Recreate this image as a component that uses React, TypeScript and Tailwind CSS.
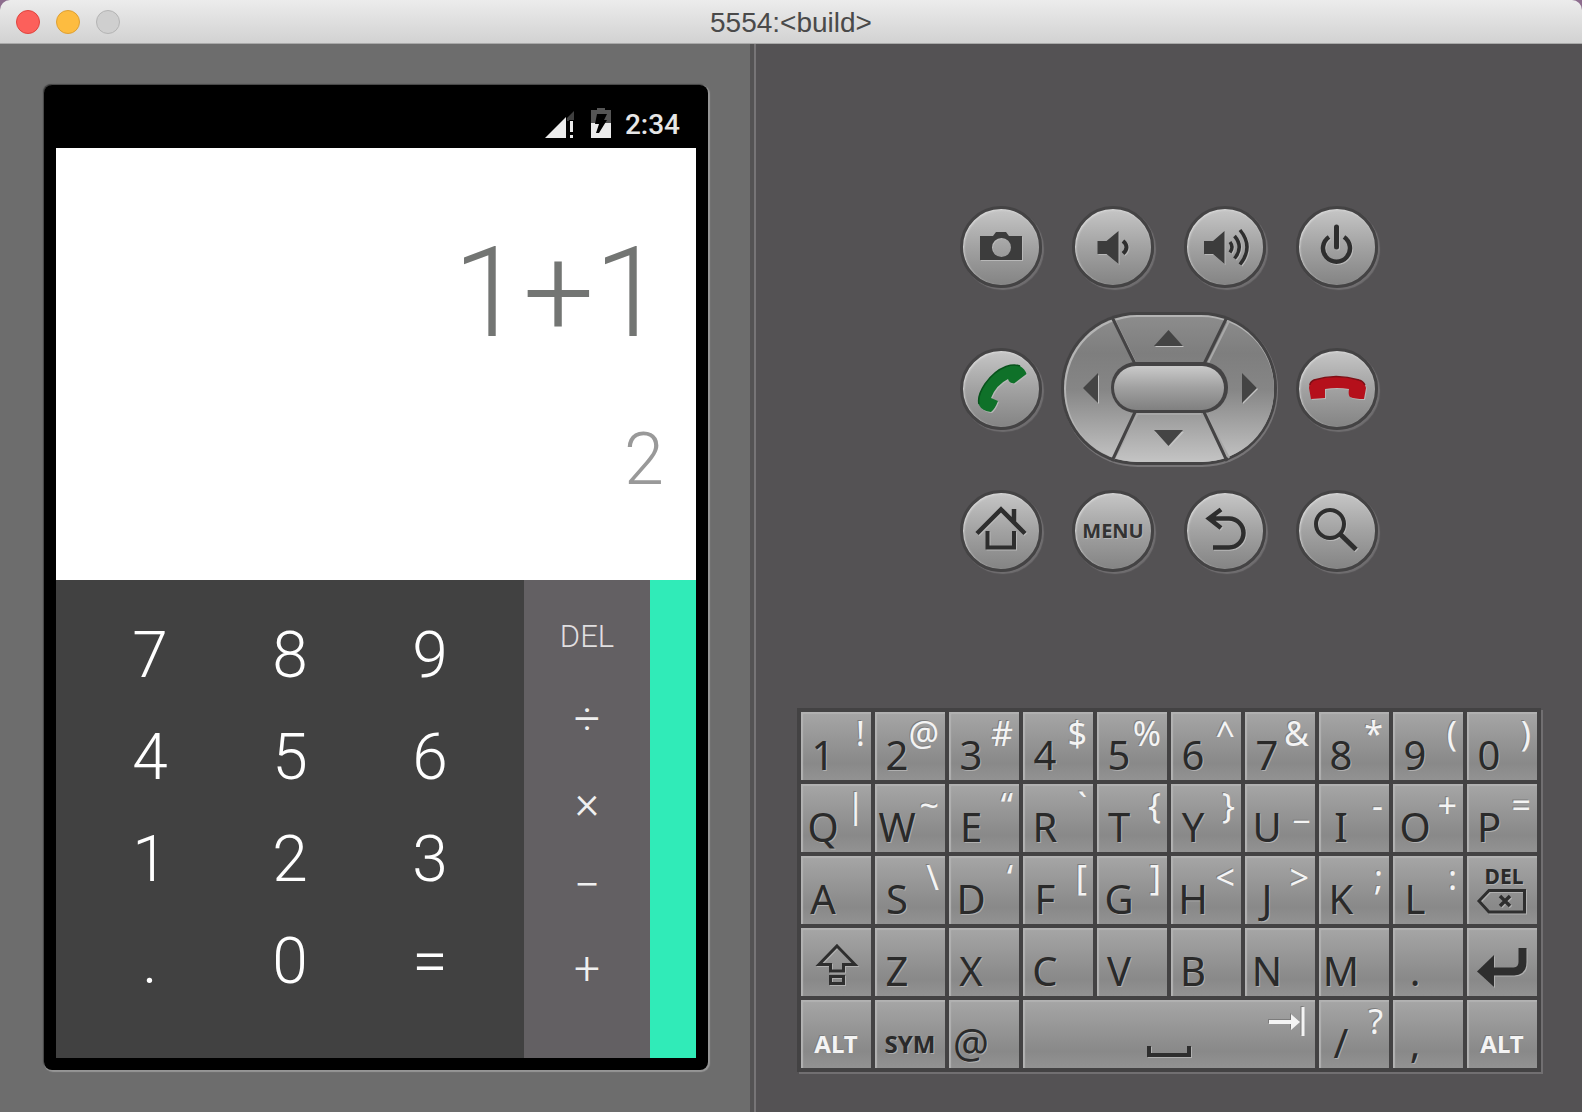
import type { ReactNode } from "react";

const ink = "#2e2e2e";
const SANS = "font-['Noto_Sans','Open_Sans',sans-serif]";

const digitRows = ["7", "8", "9", "4", "5", "6", "1", "2", "3", ".", "0", "="];
const operators = ["÷", "×", "−", "+"];

type KeyDef = { main: string; alt?: string };

const keyRows: KeyDef[][] = [
  [
    { main: "1", alt: "!" },
    { main: "2", alt: "@" },
    { main: "3", alt: "#" },
    { main: "4", alt: "$" },
    { main: "5", alt: "%" },
    { main: "6", alt: "^" },
    { main: "7", alt: "&" },
    { main: "8", alt: "*" },
    { main: "9", alt: "(" },
    { main: "0", alt: ")" },
  ],
  [
    { main: "Q", alt: "|" },
    { main: "W", alt: "~" },
    { main: "E", alt: "“" },
    { main: "R", alt: "`" },
    { main: "T", alt: "{" },
    { main: "Y", alt: "}" },
    { main: "U", alt: "_" },
    { main: "I", alt: "-" },
    { main: "O", alt: "+" },
    { main: "P", alt: "=" },
  ],
  [
    { main: "A" },
    { main: "S", alt: "\\" },
    { main: "D", alt: "‘" },
    { main: "F", alt: "[" },
    { main: "G", alt: "]" },
    { main: "H", alt: "<" },
    { main: "J", alt: ">" },
    { main: "K", alt: ";" },
    { main: "L", alt: ":" },
  ],
];
const bottomLetters = ["Z", "X", "C", "V", "B", "N", "M", "."];

function TitleBar() {
  return (
    <div className="bg-[#8d6d8e]">
      <header className="grid h-11 grid-cols-[1fr_auto_1fr] items-center rounded-t-[10px] border-b border-[#a9a9a9] bg-linear-to-b from-[#ececec] to-[#d2d2d2] px-4">
        <div className="flex gap-4">
          <button aria-label="Close" className="size-6 rounded-full border border-[#e0443e] bg-[#fc605b]" />
          <button aria-label="Minimize" className="size-6 rounded-full border border-[#dea034] bg-[#fdbc40]" />
          <button aria-label="Zoom" disabled className="size-6 rounded-full border border-[#b4b4b4] bg-[#cfcfcf]" />
        </div>
        <h1 className="pt-0.5 font-['Liberation_Sans',sans-serif] text-[28px] leading-8 text-[#4a4a4a]">
          5554:&lt;build&gt;
        </h1>
      </header>
    </div>
  );
}

function StatusBar() {
  return (
    <div className="flex h-12 items-center justify-end pr-4 pt-0.5">
      <svg width="30" height="34" viewBox="0 0 30 34" className="mr-4" aria-label="Signal">
        <path d="M22 10 L29 3 V13 H22 Z" fill="#3f3f3f" />
        <path d="M0 30 L21 9 V30 Z" fill="#ececec" />
        <path d="M24 12 H29 V31 H24 Z" fill="#000" />
        <path d="M25 13 H28 V24 H25 Z M25 27 H28 V30 H25 Z" fill="#ececec" />
      </svg>
      <svg width="20" height="34" viewBox="0 0 20 34" className="mr-3.5" aria-label="Battery charging">
        <path d="M6 0 H14 V2 H20 V15 H0 V2 H6 Z" fill="#555" />
        <path d="M0 15 H20 V30 H0 Z" fill="#ececec" />
        <path d="M6 6 H16 L13 12 H16 L8 25 H5 L8 16 H4 Z" fill="#000" />
      </svg>
      <span className="font-['Roboto',sans-serif] text-[28px] font-medium leading-8 text-[#e6e6e6]">2:34</span>
    </div>
  );
}

function Phone() {
  return (
    <section
      aria-label="Device screen"
      className="flex flex-1 flex-col rounded-lg bg-black px-3 pb-3 pt-[15px] font-['Roboto',sans-serif] font-light shadow-[1px_1px_1px_1px_#969696,-1px_-1px_1px_0_#3c3c3c]"
    >
      <StatusBar />
      <div className="flex h-[432px] flex-col items-end bg-white px-8 pt-[70px]">
        <output className="text-[126px] leading-[150px] text-[#737573]">1+1</output>
        <output className="mt-[50px] text-7xl leading-[84px] text-[#999]">2</output>
      </div>
      <div className="flex flex-1">
        <div className="grid flex-1 auto-rows-[102px] grid-cols-3 bg-[#414141] px-6 pt-[25px]">
          {digitRows.map((d) => (
            <button key={d} className="text-[64px] leading-[102px] text-white">
              {d}
            </button>
          ))}
        </div>
        <div className="grid w-[126px] auto-rows-[83px] bg-[#636063] pt-[15px]">
          <button className="text-[31px] leading-[83px] text-[#e0dfe0]">DEL</button>
          {operators.map((o) => (
            <button key={o} className="text-[46px] leading-[83px] text-[#f0f0f0]">
              {o}
            </button>
          ))}
        </div>
        <button aria-label="Advanced functions" className="w-[46px] bg-[#30ebb8]" />
      </div>
    </section>
  );
}

function RoundButton({ label, children }: { label: string; children: ReactNode }) {
  return (
    <button
      aria-label={label}
      className="grid size-[82px] place-items-center self-center justify-self-center rounded-full border-[3px] border-[#444344] bg-linear-to-b from-[#c6c6c6] via-[#a2a2a2] via-50% to-[#848484] shadow-[2px_2px_1px_0_#706e70,inset_1px_1px_2px_0_#d8d8d8]"
    >
      {children}
    </button>
  );
}

function Glyph({ children }: { children: ReactNode }) {
  return (
    <svg
      width="82"
      height="82"
      viewBox="0 0 82 82"
      className="-m-[3px] drop-shadow-[1px_1px_0_#b8b8b8]"
      fill="none"
      aria-hidden="true"
    >
      {children}
    </svg>
  );
}

function DPad() {
  return (
    <div className="relative col-span-2 h-[154px] w-[216px] justify-self-center" role="group" aria-label="Directional pad">
      <svg width="220" height="158" viewBox="0 0 220 158" aria-hidden="true" className="absolute left-0 top-0">
        <defs>
          <linearGradient id="pad" x1="0" y1="0" x2="0" y2="1">
            <stop offset="0" stopColor="#8c8c8c" />
            <stop offset="0.25" stopColor="#7e7e7e" />
            <stop offset="0.5" stopColor="#868686" />
            <stop offset="1" stopColor="#c4c4c4" />
          </linearGradient>
          <linearGradient id="pill" x1="0" y1="0" x2="0" y2="1">
            <stop offset="0" stopColor="#cacaca" />
            <stop offset="0.5" stopColor="#a0a0a0" />
            <stop offset="1" stopColor="#808080" />
          </linearGradient>
        </defs>
        <rect x="1" y="1" width="216" height="154" rx="76" fill="#777577" />
        <rect x="0" y="0" width="216" height="153" rx="76" fill="#444344" />
        <rect x="3" y="3" width="210" height="147" rx="73" fill="#b4b4b4" />
        <rect x="5" y="5" width="208" height="145" rx="72" fill="url(#pad)" />
        <g stroke="#a8a8a8" strokeWidth="2">
          <path d="M53 7 L77 56 M168 9 L145 55 M77 101 L53 147 M144 100 L168 146" />
          <path d="M77 102 H140" />
        </g>
        <g stroke="#444344" strokeWidth="3">
          <path d="M51 5 L75 54 M166 5 L142 54 M75 98 L51 149 M142 98 L166 149" />
        </g>
        <rect x="50" y="50" width="117" height="51" rx="25" fill="#444344" />
        <rect x="53" y="54" width="110" height="44" rx="22" fill="url(#pill)" />
        <g fill="#c2c2c2">
          <path d="M94 35 H123 L108 20 Z M94 120 H123 L109 135 Z M38 63 V92 L24 77 Z M182 63 V92 L197 77 Z" />
        </g>
        <g fill="#444">
          <path d="M93 34 H122 L107.500 18 Z M93 118 H122 L107.500 134 Z M37 61 V91 L22 76 Z M181 61 V91 L196 76 Z" />
        </g>
      </svg>
      <div className="relative grid h-full grid-cols-[50px_1fr_50px] grid-rows-[50px_1fr_50px]">
        <button aria-label="Up" className="col-start-2 row-start-1" />
        <button aria-label="Left" className="col-start-1 row-start-2" />
        <button aria-label="Select" className="col-start-2 row-start-2" />
        <button aria-label="Right" className="col-start-3 row-start-2" />
        <button aria-label="Down" className="col-start-2 row-start-3" />
      </div>
    </div>
  );
}

function HardwareButtons() {
  return (
    <section aria-label="Hardware buttons" className="grid grid-cols-[repeat(4,112px)] gap-y-6">
      <RoundButton label="Camera">
        <Glyph>
          <path
            fillRule="evenodd"
            fill="#3c3c3c"
            d="M20 30 H33 L36 26 H46 L49 30 H62 V54 H20 Z M41.500 32 A9.500 9.500 0 1 0 41.500 51 A9.500 9.500 0 1 0 41.500 32 Z"
          />
        </Glyph>
      </RoundButton>
      <RoundButton label="Volume down">
        <Glyph>
          <path fill="#3c3c3c" d="M25.500 35 H34.500 L46.500 25 V58 L34.500 48 H25.500 Z" />
          <path stroke={ink} strokeWidth="4" d="M51 35 Q58 41 51 47.500" />
        </Glyph>
      </RoundButton>
      <RoundButton label="Volume up">
        <Glyph>
          <path fill="#3c3c3c" d="M20 35 H29 L40.500 25 V58 L29 48 H20 Z" />
          <path
            stroke={ink}
            strokeWidth="3.500"
            d="M46 36 Q50 41 46 46.500 M50.500 30 Q60 41 50.500 52.500 M56 24 Q70 41 56 58.500"
          />
        </Glyph>
      </RoundButton>
      <RoundButton label="Power">
        <Glyph>
          <path stroke={ink} strokeWidth="4.500" d="M33 31 A13.500 13.500 0 1 0 48 31" />
          <path stroke={ink} strokeWidth="5" strokeLinecap="round" d="M40.500 21 V41" />
        </Glyph>
      </RoundButton>

      <RoundButton label="Call">
        <Glyph>
          <path
            fill="#0f7129"
            d="M46 18.500 Q54 16 60 18 Q65 21 66.500 26 L54 35.500 Q49 35 48 31 Q36 37 31 50 L38 53 Q35 61 31 64 Q22 63 19 57 Q17 48 25 36 Q34 23 46 18.500 Z"
          />
          <path stroke="#07521b" strokeWidth="1.500" d="M19 56 Q17 48 25 36 Q34 23 46 18.500 Q54 16 60 18" />
        </Glyph>
      </RoundButton>
      <DPad />
      <RoundButton label="End call">
        <Glyph>
          <path
            fill="#b5101b"
            d="M13 40 Q13 34 18 32 Q40 25 63 32 Q69 34 70 40 L68 51 Q59 51 54 49 Q52 47 53 41 Q41 39 29 41 L29 50 L15 51 Z"
          />
          <path stroke="#7d0f16" strokeWidth="1.500" d="M14 37 Q14 34 18 32 Q40 25 63 32 Q67 33 69 37" />
        </Glyph>
      </RoundButton>

      <RoundButton label="Home">
        <Glyph>
          <path stroke={ink} strokeWidth="4.500" d="M17 43.500 L41 19.500 L65 43.500 M54 19 V32" />
          <path stroke={ink} strokeWidth="4" d="M27.500 41 V57.500 H54 V41" />
        </Glyph>
      </RoundButton>
      <RoundButton label="Menu">
        <span className={`${SANS} text-xl font-bold leading-6 text-[#333] [text-shadow:1px_1px_0_#b4b4b4]`}>MENU</span>
      </RoundButton>
      <RoundButton label="Back">
        <Glyph>
          <path stroke={ink} strokeWidth="4.500" d="M37 19.500 L25 28.500 L37 38 M26 28.500 H45 A14.500 14.500 0 0 1 45 57.500 H29" />
        </Glyph>
      </RoundButton>
      <RoundButton label="Search">
        <Glyph>
          <circle cx="34" cy="34" r="14" stroke={ink} strokeWidth="4" />
          <path stroke={ink} strokeWidth="5" d="M44 44 L60 59.500" />
        </Glyph>
      </RoundButton>
    </section>
  );
}

function Key({ label, wide, children }: { label: string; wide?: boolean; children: ReactNode }) {
  return (
    <button
      aria-label={label}
      className={`grid h-[68px] bg-linear-to-b from-[#a6a6a6] via-[#898989] via-75% to-[#929292] shadow-[inset_2px_2px_1px_0_#b2b2b2] ${wide ? "col-span-4" : ""}`}
    >
      {children}
    </button>
  );
}

function MainChar({ children }: { children: ReactNode }) {
  return (
    <span
      className={`${SANS} w-11 self-end pb-[5px] text-center text-[40px] leading-10 text-[#2a2a2a] [grid-area:1/1] [text-shadow:1px_1px_0_#b0b0b0]`}
    >
      {children}
    </span>
  );
}

function AltChar({ children }: { children: ReactNode }) {
  return (
    <span
      className={`${SANS} self-start justify-self-end pr-1.5 pt-1 text-[34px] leading-[34px] text-[#f4f4f4] [grid-area:1/1] [text-shadow:-1px_-1px_0_#7c7c7c]`}
    >
      {children}
    </span>
  );
}

function KeyArt({ children }: { children: ReactNode }) {
  return (
    <svg
      width="70"
      height="68"
      viewBox="0 0 70 68"
      className="place-self-center drop-shadow-[1px_1px_0_#b0b0b0] [grid-area:1/1]"
      fill="none"
      aria-hidden="true"
    >
      {children}
    </svg>
  );
}

function WordKey({ word, light }: { word: string; light?: boolean }) {
  return (
    <Key label={word}>
      <span
        className={`${SANS} self-end justify-self-center pb-2.5 text-2xl font-bold leading-7 ${light ? "text-[#f4f4f4] [text-shadow:-1px_-1px_0_#7c7c7c]" : "text-[#2a2a2a] [text-shadow:1px_1px_0_#b0b0b0]"}`}
      >
        {word}
      </span>
    </Key>
  );
}

function Keyboard() {
  return (
    <section
      aria-label="Keyboard"
      className="grid w-full max-w-[744px] grid-cols-10 gap-1 bg-[#434243] p-1 shadow-[2px_2px_0_0_#716f71]"
    >
      {keyRows.flat().map((k) => (
        <Key key={k.main} label={k.main}>
          <MainChar>{k.main}</MainChar>
          {k.alt ? <AltChar>{k.alt}</AltChar> : null}
        </Key>
      ))}
      <Key label="Delete">
        <span
          className={`${SANS} self-start justify-self-center pl-1 pt-2 text-[21px] font-bold leading-6 text-[#2a2a2a] [grid-area:1/1] [text-shadow:1px_1px_0_#b0b0b0]`}
        >
          DEL
        </span>
        <KeyArt>
          <path stroke={ink} strokeWidth="3" d="M12 45 L22 34.500 H57.500 V56 H22 Z" />
          <path stroke={ink} strokeWidth="3.500" d="M33 40 L43 50 M43 40 L33 50" />
        </KeyArt>
      </Key>

      <Key label="Shift">
        <KeyArt>
          <path
            stroke={ink}
            strokeWidth="3"
            d="M36 18 L54 36.500 H42.500 V43 H29.500 V36.500 H18 Z M29.500 48.500 H42.500 V55.500 H29.500 Z"
          />
        </KeyArt>
      </Key>
      {bottomLetters.map((k) => (
        <Key key={k} label={k}>
          <MainChar>{k}</MainChar>
        </Key>
      ))}
      <Key label="Enter">
        <KeyArt>
          <path fill={ink} d="M10 43.500 L27 27 V59 Z" />
          <path stroke={ink} strokeWidth="8" d="M26 43.500 H47 Q55.500 43 55.500 34 V20" />
        </KeyArt>
      </Key>

      <WordKey word="ALT" light />
      <WordKey word="SYM" />
      <Key label="@">
        <MainChar>@</MainChar>
      </Key>
      <Key label="Space" wide>
        <svg
          width="44"
          height="12"
          viewBox="0 0 44 12"
          fill="none"
          aria-hidden="true"
          className="mb-2.5 self-end justify-self-center drop-shadow-[1px_1px_0_#b0b0b0] [grid-area:1/1]"
        >
          <path stroke={ink} strokeWidth="4" d="M2 0 V9 H42 V0" />
        </svg>
        <svg
          width="36"
          height="30"
          viewBox="0 0 36 30"
          fill="none"
          aria-hidden="true"
          className="mr-2.5 mt-[7px] justify-self-end drop-shadow-[-1px_-1px_0_#7c7c7c] [grid-area:1/1]"
        >
          <path stroke="#f4f4f4" strokeWidth="4" d="M0 15 H25" />
          <path fill="#f4f4f4" d="M22 7 L31 15 L22 23 Z" />
          <path stroke="#f4f4f4" strokeWidth="3" d="M34 0 V29" />
        </svg>
      </Key>
      <Key label="/">
        <MainChar>/</MainChar>
        <AltChar>?</AltChar>
      </Key>
      <Key label=",">
        <MainChar>,</MainChar>
      </Key>
      <WordKey word="ALT" light />
    </section>
  );
}

export default function App() {
  return (
    <div className="flex min-h-screen flex-col bg-[#545254]">
      <TitleBar />
      <main className="grid flex-1 grid-cols-[756fr_826fr]">
        <div className="flex flex-col border-r-2 border-[#777577] bg-[#6d6d6d]">
          <div className="flex flex-1 flex-col border-r-4 border-[#545354] pb-[42px] pl-11 pr-[42px] pt-[41px]">
            <Phone />
          </div>
        </div>
        <div className="flex flex-col items-center justify-between px-10 pb-10 pt-[162px]">
          <HardwareButtons />
          <Keyboard />
        </div>
      </main>
    </div>
  );
}
